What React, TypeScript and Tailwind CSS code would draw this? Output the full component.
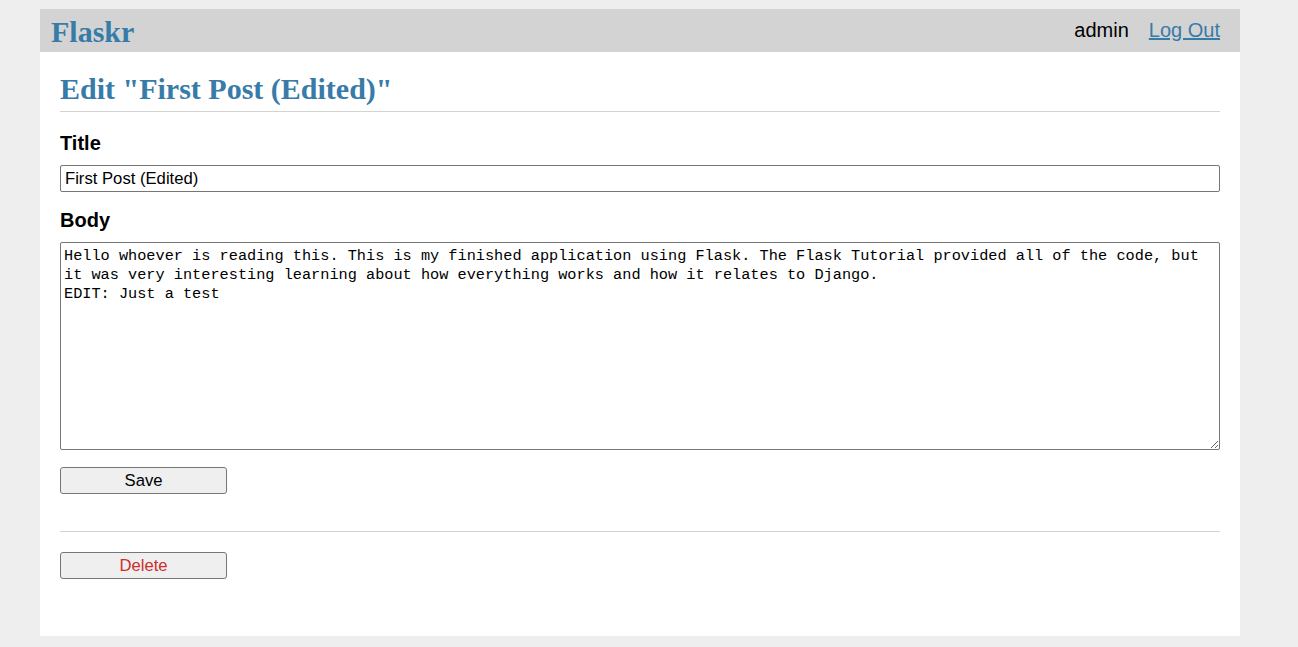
const BODY_TEXT =
  'Hello whoever is reading this. This is my finished application using Flask. The Flask Tutorial provided all of the code, but it was very interesting learning about how everything works and how it relates to Django.\nEDIT: Just a test';

const sans = "font-['Liberation_Sans',Arial,sans-serif]";
const serif = "font-['Liberation_Serif','Times_New_Roman',serif]";

function Nav() {
  return (
    <nav className="flex h-[43px] items-center bg-[#d3d3d3] pl-[11px] pr-[20px]">
      <h1 className={`${serif} flex-1 pt-[2px] text-[30px] font-bold leading-[34px] text-[#377ba8]`}>
        <a href="#">Flaskr</a>
      </h1>
      <ul className="flex text-[20px] leading-[23px]">
        <li>
          <span className="block px-[10px] text-black">admin</span>
        </li>
        <li>
          <a href="#" className="block pl-[10px] text-[#377ba8] underline">
            Log Out
          </a>
        </li>
      </ul>
    </nav>
  );
}

function Button({ label, danger }: { label: string; danger?: boolean }) {
  return (
    <button
      type="button"
      className={`h-[27px] w-[167px] rounded-[3px] border border-[#767676] bg-[#efefef] pb-[1px] text-[16.67px] leading-[19px] ${
        danger ? 'text-[#cc2f2e]' : 'text-black'
      }`}
    >
      {label}
    </button>
  );
}

export default function App() {
  return (
    <div className={`${sans} min-h-screen bg-[#eeeeee] pt-[9px] pb-[11px]`}>
      <div className="ml-[40px] w-[1200px] bg-white">
        <Nav />
        <section className="px-[20px] pb-[57px]">
          <header className="mt-[20px] border-b border-[#d3d3d3] pb-[5px]">
            <h1 className={`${serif} text-[30px] font-bold leading-[34px] text-[#377ba8]`}>
              Edit "First Post (Edited)"
            </h1>
          </header>

          <form className="mt-[20px] flex flex-col">
            <label className="mb-[10px] text-[20px] font-bold leading-[23px] text-black">Title</label>
            <input
              defaultValue="First Post (Edited)"
              className="mb-[17px] h-[27px] rounded-[2px] border border-[#767676] pl-[4px] text-[16.67px] text-black outline-none"
            />
            <label className="mb-[10px] text-[20px] font-bold leading-[23px] text-black">Body</label>
            <textarea
              defaultValue={BODY_TEXT}
              className="mb-[17px] h-[208px] resize-y rounded-[2px] border border-[#767676] px-[3px] pt-[4px] pb-[2px] font-['Liberation_Mono','DejaVu_Sans_Mono',monospace] text-[15.25px] leading-[19px] text-black outline-none"
            />
            <div>
              <Button label="Save" />
            </div>
          </form>

          <hr className="mt-[37px] border-0 border-t border-[#d3d3d3]" />

          <form className="mt-[20px]">
            <Button label="Delete" danger />
          </form>
        </section>
      </div>
    </div>
  );
}
